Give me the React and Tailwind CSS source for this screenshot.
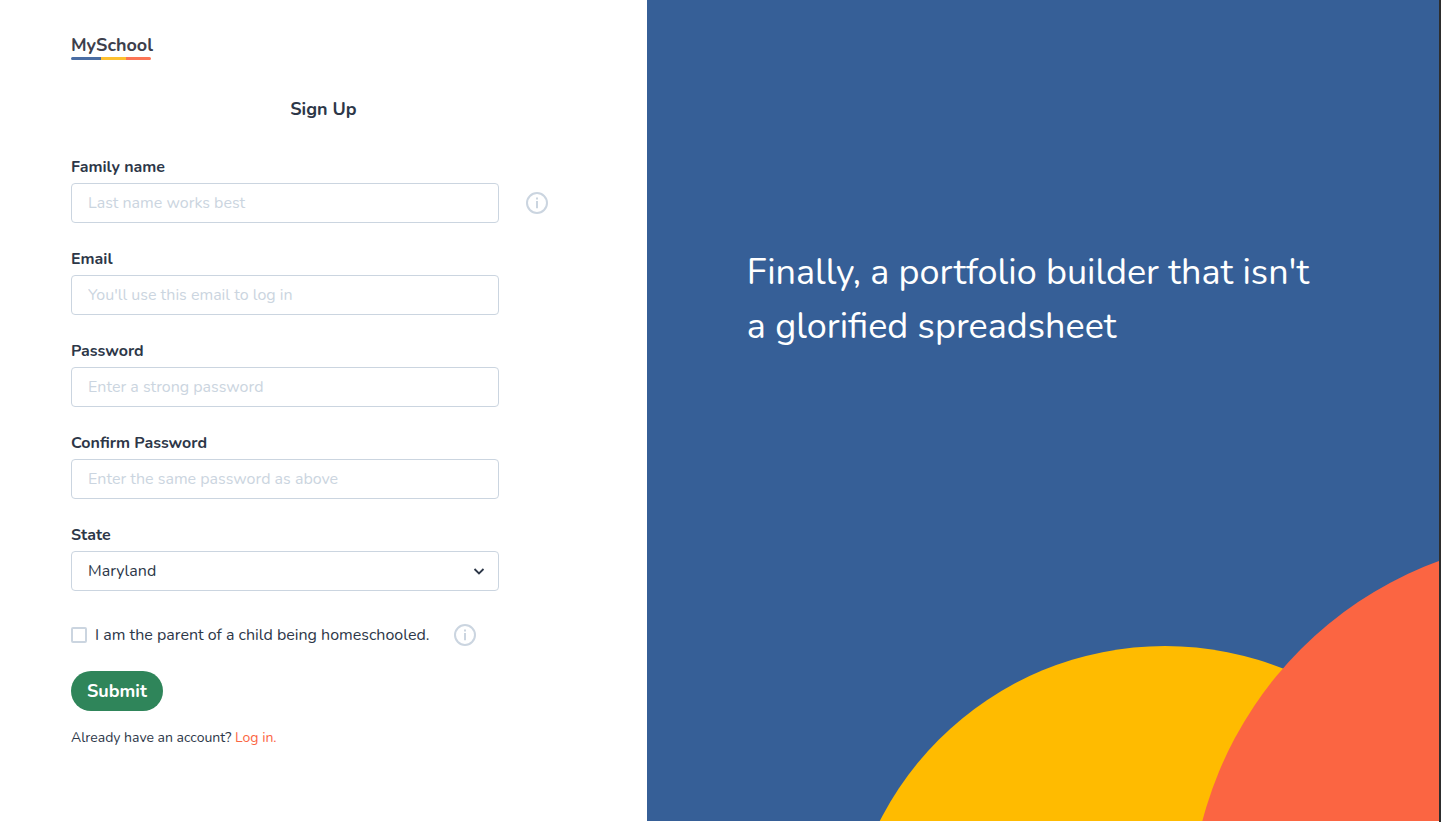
import React from "react";

function InfoButton({ label }) {
  return (
    <button type="button" aria-label={label} className="shrink-0 text-[#cbd5e0]">
      <svg className="size-6" viewBox="0 0 24 24" fill="none" stroke="currentColor" strokeWidth="2">
        <circle cx="12" cy="12" r="10" />
        <path d="M12 10v7.300" />
        <path d="M12 6.600v1.800" />
      </svg>
    </button>
  );
}

const control =
  "block h-10 w-full rounded-[4px] border border-[#cbd5e0] bg-white px-4 text-base placeholder:text-[#cbd5e0] placeholder:opacity-100";

function Field({ id, label, info, children, ...input }) {
  return (
    <div>
      <label htmlFor={id} className="mb-1 block leading-6 font-bold">
        {label}
      </label>
      <div className="flex items-center gap-[26px]">
        <div className="w-full max-w-[428px]">
          {children || <input id={id} className={control} {...input} />}
        </div>
        {info && <InfoButton label={info} />}
      </div>
    </div>
  );
}

function Logo() {
  return (
    <a href="#home" className="inline-block text-[#3d3f4c]">
      <span className="block text-lg leading-6 font-bold">MySchool</span>
      <span className="flex h-[3px] w-20 overflow-hidden rounded-full">
        <span className="w-[30px] bg-[#4a6da3]" />
        <span className="w-[25px] bg-[#fdc02f]" />
        <span className="w-[25px] bg-[#fc7555]" />
      </span>
    </a>
  );
}

function SignUpForm() {
  return (
    <form className="mt-8 flex flex-col" onSubmit={(e) => e.preventDefault()}>
      <div className="flex flex-col gap-6">
        <Field id="family" label="Family name" info="About the family name" placeholder="Last name works best" />
        <Field id="email" label="Email" type="email" placeholder="You'll use this email to log in" />
        <Field id="password" label="Password" type="password" placeholder="Enter a strong password" />
        <Field id="confirm" label="Confirm Password" type="password" placeholder="Enter the same password as above" />
        <Field id="state" label="State">
          <div className="relative">
            <select id="state" defaultValue="Maryland" className={`${control} appearance-none`}>
              <option>Maryland</option>
              <option>Virginia</option>
              <option>Pennsylvania</option>
            </select>
            <svg
              className="pointer-events-none absolute top-3 right-3 size-4"
              viewBox="0 0 16 16"
              fill="none"
              stroke="currentColor"
              strokeWidth="1.8"
            >
              <path d="M3.500 6l4.500 4.400L12.500 6" />
            </svg>
          </div>
        </Field>
      </div>
      <div className="mt-8 flex items-center gap-6">
        <label className="flex items-center gap-2 leading-6">
          <input
            type="checkbox"
            className="size-4 shrink-0 appearance-none rounded-[2px] border-2 border-[#cbd5e0] checked:bg-[#2f855a]"
          />
          I am the parent of a child being homeschooled.
        </label>
        <InfoButton label="About homeschooling parents" />
      </div>
      <button
        type="submit"
        className="mt-6 h-10 self-start rounded-full bg-[#2f855a] px-4 text-lg font-bold text-white"
      >
        Submit
      </button>
      <p className="mt-4 text-sm leading-[22px]">
        Already have an account?{" "}
        <a href="#login" className="text-[#fb6542]">
          Log in.
        </a>
      </p>
    </form>
  );
}

export default function App() {
  return (
    <div className="flex min-h-screen border-r-2 border-[#2d2d2d] bg-white font-['Nunito','Open_Sans',sans-serif] text-[#2d3748]">
      <main className="w-[44.95%] shrink-0 px-[71px] pt-[33px]">
        <Logo />
        <h1 className="mt-7 text-center text-lg leading-7 font-bold">Sign Up</h1>
        <SignUpForm />
      </main>
      <aside className="relative mb-px flex-1 overflow-hidden bg-[#365f97]">
        <svg className="absolute right-0 bottom-0 h-[261px] w-[792px]" viewBox="0 0 792 261">
          <circle cx="518" cy="406" r="320" fill="#ffbb00" />
          <circle cx="922" cy="357" r="379" fill="#fb6542" />
        </svg>
        <p className="relative pt-[246px] pr-28 pl-[100px] text-4xl leading-[54px] text-white">
          Finally, a portfolio builder that isn't a glorified spreadsheet
        </p>
      </aside>
    </div>
  );
}
